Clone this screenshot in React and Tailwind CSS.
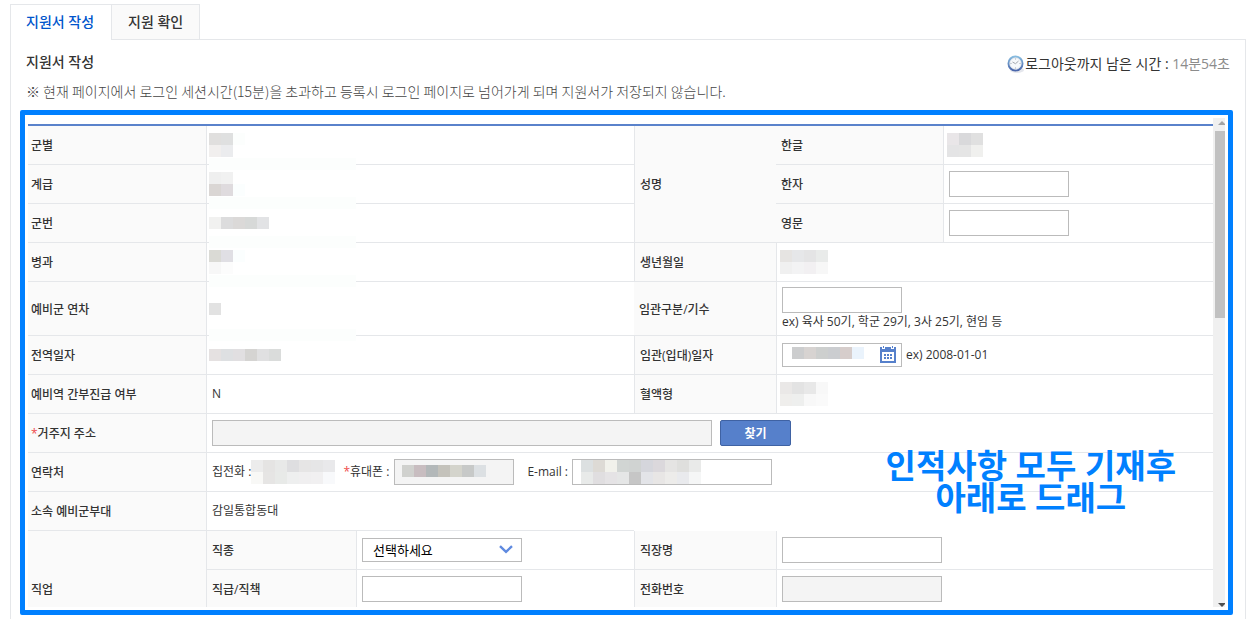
import { useState } from 'react';

const TABS = ['지원서 작성', '지원 확인'];

// one colour per 12px block, row by row
const MASKS = {
  branch: [['#e0dfde', '#dfe0e0', '#fcfefd'], ['#f1efee', '#ebecee']],
  rank: [['#efefef', '#f1f1f1'], ['#dad6d4', '#dfdbde', '#fbfefe']],
  serial: [['#f1f1f0', '#dcdcdd', '#dbd9d8', '#d7d9d8', '#e2e3e5']],
  corps: [['#dadad5', '#e0dfe4', '#fbfefe'], ['#f7f7f7', '#fcfcfc']],
  year: [['#e2e2e2']],
  discharge: [['#e5e1e1', '#dee0e2', '#e1dfe1', '#d5d4d2', '#e0e0e1', '#dadcdb']],
  name: [['#e9e6e8', '#d9d9db', '#e0e0e0'], ['#e4e4e5', '#e5e5e5', '#f0f0ee']],
  birth: [['#e6e4e2', '#e6e7e9', '#e4e4e5', '#e9ebea'], ['#f0f0f0', '#f3f3f4', '#f2f0f2', '#f7f7f7']],
  joined: [['#cccdce', '#d7d3d1', '#cdcfce', '#cbcdd0', '#d6cdcb', '#eaf3fc']],
  blood: [['#eae8e7', '#e3e3e3', '#e8e8e8', '#f8f8f8'], ['#efeeec', '#eeefee', '#f8f8f8', '#fafafa']],
  home: [
    ['#ececec', '#e5e4e3', '#e8e9e8', '#dedee0', '#e6e5e5', '#e6e6e7', '#e9e9eb'],
    ['#f8f8f6', '#e6e5e4', '#e8eae8', '#eeefef', '#f0eff0', '#f1f0f1', '#f8f9fb'],
  ],
  mobile: [['#d0d1ce', '#c8bdc0', '#b3b8b9', '#c4c2bb', '#d4d4cc', '#c7c9c8', '#dce0e3']],
  email: [
    ['#dce0e1', '#dddad5', '#f1f1eb', '#d1d5d3', '#d0d3d2', '#d5d6dc', '#dbd8dc', '#e5e4e3', '#dfdfdd', '#e9eae9'],
    ['#e8eae9', '#e0dee0', '#e5e3e5', '#e5e6e6', '#c6c6c6', '#e3e4e8', '#e8e6e5', '#edecea', '#e9eaed', '#f5f6f6'],
  ],
};

function Mask({ id, className = '' }) {
  const rows = MASKS[id];
  const cols = Math.max(...rows.map((row) => row.length));

  return (
    <svg
      width={cols * 12}
      height={rows.length * 12}
      className={`block shrink-0 ${className}`}
      shapeRendering="crispEdges"
      aria-hidden="true"
    >
      {rows.map((row, y) =>
        row.map((fill, x) => <rect key={`${x}-${y}`} x={x * 12} y={y * 12} width="12" height="12" fill={fill} />)
      )}
    </svg>
  );
}

function ClockIcon() {
  return (
    <svg width="18" height="18" viewBox="0 0 18 18" aria-hidden="true">
      <defs>
        <linearGradient id="clock-ring" x1="0" y1="0" x2="0" y2="1">
          <stop offset="0" stopColor="#86bbdf" />
          <stop offset="1" stopColor="#4a66ab" />
        </linearGradient>
      </defs>
      <ellipse cx="10" cy="15" rx="7" ry="3" fill="#e4e6ec" />
      <circle cx="8.5" cy="8.5" r="7" fill="#f7f9fb" stroke="url(#clock-ring)" strokeWidth="2" />
      <circle cx="8.5" cy="8.5" r="5.7" fill="none" stroke="#cdd3dd" strokeWidth="0.6" />
      <path d="M8.5 3.5v1M8.5 12.5v1M3.5 8.5h1M12.5 8.5h1" stroke="#9aa3b2" strokeWidth="0.9" />
      <path d="M5.5 7l3 1.7 3-2.6" fill="none" stroke="#a3a7ae" strokeWidth="1" />
    </svg>
  );
}

function CalendarIcon() {
  return (
    <svg width="16" height="17" viewBox="0 0 16 17" shapeRendering="crispEdges" aria-hidden="true">
      <path d="M0 1h2v2h3V1h6v2h3V1h2v16H0z" fill="#5680cb" />
      <path d="M3 0h1v2H3zM12 0h1v2h-1z" fill="#5680cb" />
      <path d="M2 6h12v9H2z" fill="#fff" />
      <path d="M4 8h2v2H4zM7 8h2v2H7zM10 8h2v2h-2zM4 11h2v2H4zM7 11h2v2H7zM10 11h2v2h-2z" fill="#5680cb" />
    </svg>
  );
}

function Th({ children, htmlFor, first, line = true, ...rest }) {
  return (
    <th
      scope="row"
      className={`border-b border-[#e5e7ea] bg-[#fafafa] pt-[2px] text-left align-middle font-medium ${
        first ? 'pl-[3px]' : line ? 'border-l pl-[5px]' : 'pl-[5px]'
      }`}
      {...rest}
    >
      {htmlFor ? <label htmlFor={htmlFor}>{children}</label> : children}
    </th>
  );
}

function Td({ children, pad = 'pl-[5px]', ...rest }) {
  return (
    <td className={`relative border-b border-l border-[#e5e7ea] align-middle ${pad}`} {...rest}>
      {children}
    </td>
  );
}

// the pale strip hides the row line below a masked value
function MaskedTd({ id, strip, ...rest }) {
  return (
    <Td pad={strip || id === 'discharge' ? 'pl-[2px]' : 'pl-[3px]'} {...rest}>
      <Mask id={id} />
      {strip && <div className="absolute -bottom-[6px] left-[2px] h-[12px] w-[147px] bg-[#fcfefd]" />}
    </Td>
  );
}

function TextBox({ className = 'w-[120px]', ...rest }) {
  return (
    <input
      type="text"
      className={`block h-[26px] border border-[#bbbbbb] bg-white px-2 outline-none read-only:bg-[#f4f4f4] ${className}`}
      {...rest}
    />
  );
}

function Required() {
  return <span className="text-[#ef4b4b]">*</span>;
}

export default function App() {
  const [tab, setTab] = useState(0);

  return (
    <div className="bg-white pt-1 pr-[7px] pl-[10px] font-['Open_Sans','Noto_Sans_CJK_KR',sans-serif] text-[12px] leading-[18px] text-[#333333]">
      <div className="flex">
        {TABS.map((name, index) => (
          <button
            key={name}
            type="button"
            onClick={() => setTab(index)}
            className={
              tab === index
                ? 'relative z-10 -mb-px h-[36px] border border-b-0 border-[#e5e7ea] bg-white pr-[17px] pb-[2px] pl-[15px] text-[14px] font-medium text-[#0055cc]'
                : 'h-[35px] border border-b-0 border-l-0 border-[#e5e7ea] bg-[#fafafa] px-4 pb-px text-[14px] font-medium text-[#333333]'
            }
          >
            {name}
          </button>
        ))}
      </div>

      <main className="border border-b-0 border-[#e5e7ea] pt-[10px] pr-3 pb-1 pl-[9px]">
        <div className="flex items-center justify-between pr-[3px] pl-[6px] text-[14px] leading-[20px]">
          <h1 className="font-medium">지원서 작성</h1>
          <p className="flex items-center pt-1">
            <ClockIcon />
            <span>로그아웃까지 남은 시간 :&nbsp;</span>
            <span className="text-[#8c8c8c]">14분54초</span>
          </p>
        </div>
        <p className="pt-2 pb-[10px] pl-[6px] font-['Noto_Sans_CJK_KR',sans-serif] text-[14px] leading-[18px] font-light text-[#444444]">
          ※ 현재 페이지에서 로그인 세션시간(15분)을 초과하고 등록시 로그인 페이지로 넘어가게 되며 지원서가 저장되지 않습니다.
        </p>

        <section className="relative rounded-[2px] border-[5px] border-[#0080ff] p-[3px]">
          <div className="flex h-[489px]">
            <div className="min-w-0 flex-1 overflow-hidden pt-[6px]">
              <table className="w-full table-fixed border-separate border-spacing-0 border-t-2 border-[#5a82cb]">
                <colgroup>
                  <col className="w-[178px]" />
                  <col className="w-[150px]" />
                  <col className="w-[278px]" />
                  <col className="w-[142px]" />
                  <col className="w-[167px]" />
                  <col />
                </colgroup>
                <tbody>
                  <tr className="h-[39px]">
                    <Th first>군별</Th>
                    <MaskedTd id="branch" strip colSpan={2} />
                    <Th rowSpan={3}>성명</Th>
                    <Th line={false}>한글</Th>
                    <MaskedTd id="name" />
                  </tr>
                  <tr className="h-[39px]">
                    <Th first>계급</Th>
                    <MaskedTd id="rank" strip colSpan={2} />
                    <Th line={false} htmlFor="hanja">한자</Th>
                    <Td><TextBox id="hanja" /></Td>
                  </tr>
                  <tr className="h-[39px]">
                    <Th first>군번</Th>
                    <MaskedTd id="serial" strip colSpan={2} />
                    <Th line={false} htmlFor="english">영문</Th>
                    <Td><TextBox id="english" /></Td>
                  </tr>
                  <tr className="h-[39px]">
                    <Th first>병과</Th>
                    <MaskedTd id="corps" strip colSpan={2} />
                    <Th>생년월일</Th>
                    <MaskedTd id="birth" colSpan={2} />
                  </tr>
                  <tr className="h-[54px]">
                    <Th first>예비군 연차</Th>
                    <MaskedTd id="year" strip colSpan={2} />
                    <Th line={false} htmlFor="commission">임관구분/기수</Th>
                    <Td colSpan={2}>
                      <TextBox id="commission" />
                      <p>ex) 육사 50기, 학군 29기, 3사 25기, 현임 등</p>
                    </Td>
                  </tr>
                  <tr className="h-[39px]">
                    <Th first>전역일자</Th>
                    <MaskedTd id="discharge" colSpan={2} />
                    <Th htmlFor="joined">임관(입대)일자</Th>
                    <Td colSpan={2}>
                      <div className="flex items-center gap-1">
                        <div className="relative">
                          <input id="joined" type="text" className="block h-[24px] w-[120px] border border-[#bbbbbb] px-2" />
                          <Mask id="joined" className="absolute top-1 left-[10px]" />
                          <button type="button" aria-label="달력" className="absolute top-[3px] right-[6px]">
                            <CalendarIcon />
                          </button>
                        </div>
                        <span>ex) 2008-01-01</span>
                      </div>
                    </Td>
                  </tr>
                  <tr className="h-[39px]">
                    <Th first>예비역 간부진급 여부</Th>
                    <Td colSpan={2}>N</Td>
                    <Th>혈액형</Th>
                    <MaskedTd id="blood" colSpan={2} />
                  </tr>
                  <tr className="h-[39px]">
                    <Th first htmlFor="address"><Required />거주지 주소</Th>
                    <Td colSpan={5}>
                      <div className="flex gap-2">
                        <TextBox id="address" readOnly className="w-[500px]" />
                        <button
                          type="button"
                          className="h-[26px] w-[71px] rounded-[2px] border border-[#3f62a3] bg-[#5680cb] pt-[2px] font-bold text-white"
                        >
                          찾기
                        </button>
                      </div>
                    </Td>
                  </tr>
                  <tr className="h-[39px]">
                    <Th first>연락처</Th>
                    <Td colSpan={5}>
                      <div className="flex items-center">
                        <span>집전화 :</span>
                        <Mask id="home" />
                        <label htmlFor="mobile" className="pr-[5px] pl-2"><Required />휴대폰 :</label>
                        <div className="relative">
                          <TextBox id="mobile" readOnly />
                          <Mask id="mobile" className="absolute top-[6px] left-2" />
                        </div>
                        <label htmlFor="email" className="pr-1 pl-[13px]">E-mail :</label>
                        <div className="relative">
                          <TextBox id="email" className="w-[200px]" />
                          <Mask id="email" className="absolute top-[1px] left-[9px]" />
                        </div>
                      </div>
                    </Td>
                  </tr>
                  <tr className="h-[39px]">
                    <Th first>소속 예비군부대</Th>
                    <Td colSpan={2}>감일통합동대</Td>
                  </tr>
                  <tr className="h-[39px]">
                    <Th first rowSpan={3}>직업</Th>
                    <Th htmlFor="job">직종</Th>
                    <Td>
                      <div className="relative w-[160px]">
                        <select
                          id="job"
                          className="block h-[24px] w-full appearance-none border border-[#bbbbbb] bg-white pl-[10px] text-[13px] text-black"
                        >
                          <option>선택하세요</option>
                        </select>
                        <svg width="14" height="9" viewBox="0 0 14 9" className="pointer-events-none absolute top-[7px] right-[9px]">
                          <path d="M1 1.2l6 5.6 6-5.6" fill="none" stroke="#5f8ae0" strokeWidth="2.4" />
                        </svg>
                      </div>
                    </Td>
                    <Th htmlFor="company">직장명</Th>
                    <Td colSpan={2}><TextBox id="company" className="w-[160px]" /></Td>
                  </tr>
                  <tr className="h-[39px]">
                    <Th htmlFor="position">직급/직책</Th>
                    <Td><TextBox id="position" className="w-[160px]" /></Td>
                    <Th htmlFor="phone">전화번호</Th>
                    <Td colSpan={2}><TextBox id="phone" readOnly className="w-[160px]" /></Td>
                  </tr>
                  <tr className="h-[39px]">
                    <Td colSpan={5} />
                  </tr>
                </tbody>
              </table>
            </div>

            <div className="flex w-[12px] flex-col items-end bg-[#f0f0f0]" aria-hidden="true">
              <svg width="7" height="13" viewBox="0 0 7 13" className="shrink-0">
                <path d="M0 7h7V6L4 3z" fill="#a3a3a3" />
              </svg>
              <div className="h-[187px] w-[10px] bg-[#c1c1c1]" />
              <svg width="7" height="4" viewBox="0 0 7 4" className="mt-auto shrink-0">
                <path d="M0 0h7v1L4 4z" fill="#505050" />
              </svg>
            </div>
          </div>

          <p className="pointer-events-none absolute right-[52px] bottom-[96px] text-center text-[33px] leading-[32px] font-bold text-[#0080ff]">
            인적사항 모두 기재후
            <br />
            아래로 드래그
          </p>
        </section>
      </main>
    </div>
  );
}
